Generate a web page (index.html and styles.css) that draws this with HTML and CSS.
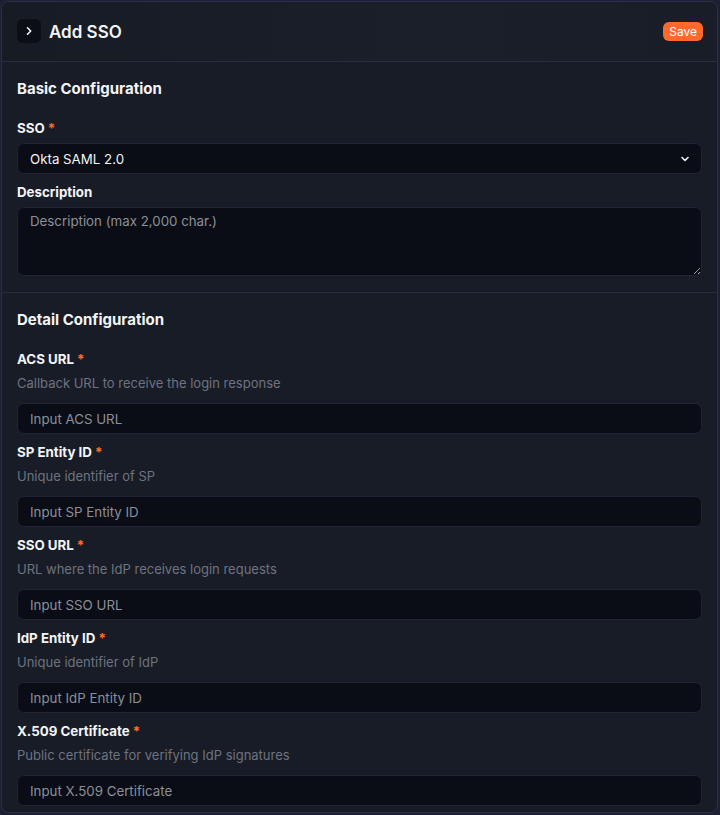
FILE: index.html
```html
<!DOCTYPE html>
<html lang="en">
<head>
<meta charset="utf-8">
<title>Add SSO</title>
<link rel="stylesheet" href="styles.css">
</head>
<body>
<div class="panel">
  <header class="head">
    <div class="head-left">
      <button class="icon-btn" type="button" aria-label="Collapse">
        <svg width="10" height="10" viewBox="0 0 10 10"><path d="M3.5 1.8 L6.7 5 L3.5 8.2" fill="none" stroke="#f2f2f2" stroke-width="1.6" stroke-linecap="round" stroke-linejoin="round"/></svg>
      </button>
      <h1 class="title">Add SSO</h1>
    </div>
    <button class="save" type="button">Save</button>
  </header>

  <section class="section">
    <h2 class="section-title">Basic Configuration</h2>
    <div class="field">
      <label class="label">SSO<span class="req">*</span></label>
      <div class="select">
        <span>Okta SAML 2.0</span>
        <svg width="12" height="12" viewBox="0 0 12 12"><path d="M3 4.5 L6 7.5 L9 4.5" fill="none" stroke="#f2f2f2" stroke-width="1.6" stroke-linecap="round" stroke-linejoin="round"/></svg>
      </div>
    </div>
    <div class="field">
      <label class="label">Description</label>
      <textarea class="textarea" placeholder="Description (max 2,000 char.)"></textarea>
    </div>
  </section>

  <section class="section">
    <h2 class="section-title">Detail Configuration</h2>
    <div class="field">
      <label class="label">ACS URL<span class="req">*</span></label>
      <p class="help">Callback URL to receive the login response</p>
      <input class="input" placeholder="Input ACS URL">
    </div>
    <div class="field">
      <label class="label">SP Entity ID<span class="req">*</span></label>
      <p class="help">Unique identifier of SP</p>
      <input class="input" placeholder="Input SP Entity ID">
    </div>
    <div class="field">
      <label class="label">SSO URL<span class="req">*</span></label>
      <p class="help">URL where the IdP receives login requests</p>
      <input class="input" placeholder="Input SSO URL">
    </div>
    <div class="field">
      <label class="label">IdP Entity ID<span class="req">*</span></label>
      <p class="help">Unique identifier of IdP</p>
      <input class="input" placeholder="Input IdP Entity ID">
    </div>
    <div class="field">
      <label class="label">X.509 Certificate<span class="req">*</span></label>
      <p class="help">Public certificate for verifying IdP signatures</p>
      <input class="input" placeholder="Input X.509 Certificate">
    </div>
  </section>
</div>
</body>
</html>
```

FILE: styles.css
```css
* { box-sizing: border-box; }
html, body { margin: 0; padding: 0; }
body {
  background: #1b2033;
  font-family: Inter, "Noto Sans", sans-serif;
  color: #f1f2f4;
  width: 720px;
  height: 815px;
  overflow: hidden;
}
.panel {
  margin: 1px 0 0 1px;
  width: 717px;
  height: 812px;
  overflow: hidden;
  background: #181c26;
  border: 1px solid #2a3048;
  border-radius: 8px;
  display: flex;
  flex-direction: column;
}
.head {
  height: 60px;
  flex: none;
  display: flex;
  align-items: center;
  justify-content: space-between;
  padding: 0 14px 0 15px;
  border-bottom: 1px solid #272c3f;
  background: linear-gradient(90deg, #171b24 0%, #1b1f2a 60%, #191d27 100%);
}
.head-left { display: flex; align-items: center; gap: 8px; }
.icon-btn {
  width: 24px; height: 24px;
  border: none; border-radius: 6px;
  background: #0b0e15;
  display: flex; align-items: center; justify-content: center;
  padding: 0; margin-top: -1px;
}
.title {
  margin: 0;
  font-size: 17px;
  font-weight: 600;
  line-height: 24px;
  color: #f3f4f6;
}
.save {
  border: none;
  background: #ff6a2c;
  color: #fff;
  font-family: inherit;
  font-size: 12px;
  line-height: 19px;
  height: 19px;
  padding: 0 6px;
  border-radius: 6px;
  margin-top: -1px;
}
.section {
  padding: 15px 15px 16px 15px;
  border-bottom: 1px solid #272c3f;
  display: flex;
  flex-direction: column;
  gap: 8px;
  flex: none;
}
.section-title {
  margin: 0 0 9px 0;
  font-size: 15px;
  line-height: 24px;
  font-weight: 700;
  color: #f3f4f6;
}
.field { display: flex; flex-direction: column; }
.label {
  font-size: 13.3px;
  line-height: 20px;
  font-weight: 700;
  color: #f3f4f6;
  margin-bottom: 5px;
}
.req { color: #ff6a2c; font-weight: 700; margin-left: 3px; }
.help {
  margin: -1px 0 10px 0;
  font-size: 13px;
  line-height: 20px;
  color: #6e7380;
}
.select, .input, .textarea {
  width: 100%;
  background: #0a0d15;
  border: 1px solid #1f2434;
  border-radius: 7px;
  font-family: inherit;
  font-size: 13.3px;
  color: #f1f2f4;
}
.select {
  height: 31px;
  display: flex;
  align-items: center;
  justify-content: space-between;
  padding: 0 10px 0 12px;
}
.input {
  height: 31px;
  padding: 0 12px;
  outline: none;
}
.input::placeholder, .textarea::placeholder { color: #8b8f99; }
.textarea {
  height: 69px;
  padding: 5px 12px;
  resize: vertical;
  outline: none;
  display: block;
}
```
